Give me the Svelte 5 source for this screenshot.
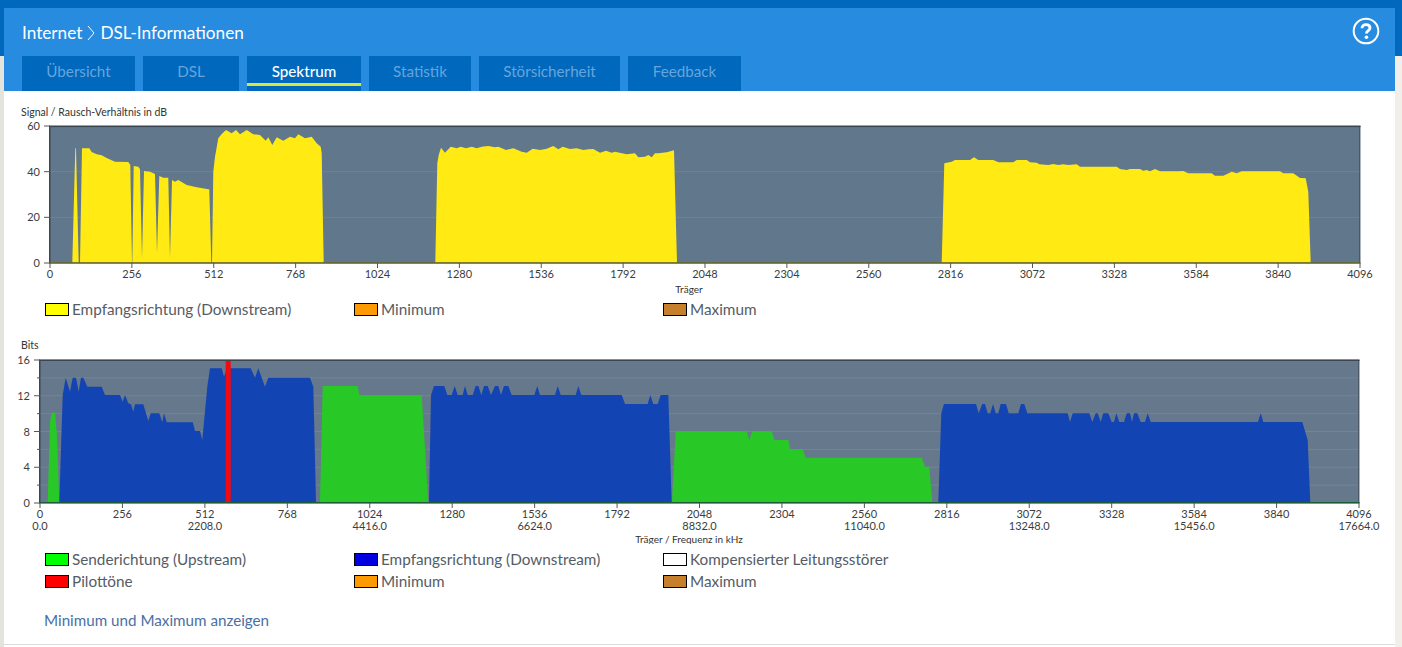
<script>
  const z = (ox, oy, pts) =>
    pts.map(([x, y]) => `${(ox + x / 3).toFixed(1)},${(oy + y / 3).toFixed(1)}`).join(' ');

  // Signal-to-noise curve, traced from the measured spectrum
  const snrA = z(0, 100, [[217,488],[226,145],[228,145],[236,488],[240,488],[246,145],[268,145],[275,156],[290,163],[305,166],[320,174],[345,185],[385,186],[391,195],[396,488],[397,488],[401,198],[415,200],[420,208],[426,475],[432,213],[450,215],[465,222],[471,460],[478,228],[490,233],[505,233],[510,475],[516,240],[525,245],[535,240],[560,255],[590,262],[625,268],[628,268],[634,488],[636,488],[640,215],[645,170],[655,115],[665,102],[678,90],[695,100],[708,90],[720,103],[740,90],[760,103],[780,105],[797,122],[805,112],[817,135],[830,112],[850,122],[870,110],[885,115],[895,103],[915,115],[935,110],[950,130],[962,140],[965,160],[971,488]]);
  const snrB = z(340, 100, [[286,488],[292,190],[296,165],[303,143],[315,158],[332,140],[350,145],[362,140],[378,145],[395,140],[410,145],[425,140],[445,138],[465,142],[475,140],[498,150],[520,145],[545,155],[560,158],[578,146],[600,150],[620,146],[640,138],[655,148],[668,140],[690,147],[710,145],[730,150],[745,148],[760,147],[780,158],[798,152],[815,158],[825,155],[860,163],[885,160],[895,172],[915,170],[925,165],[935,172],[945,160],[955,160],[980,157],[1002,151],[1011,488]]);
  const snrC = z(920, 130, [[65,398],[73,100],[95,95],[105,90],[150,90],[162,82],[175,90],[220,90],[235,97],[280,97],[290,90],[320,90],[330,97],[350,98],[358,103],[385,105],[400,102],[415,105],[430,103],[445,105],[470,103],[480,110],[590,110],[600,117],[620,120],[630,117],[660,117],[670,122],[680,120],[690,124],[705,117],[720,124],[775,124],[790,123],[805,130],[875,130],[885,137],[910,137],[935,125],[950,130],[965,124],[1080,124],[1090,130],[1120,130],[1140,144],[1157,145],[1165,185],[1172,398]]);

  // Bit allocation
  const green1 = z(0, 335, [[143,503],[150,260],[155,235],[165,232],[170,290],[178,503]]);
  const blue1 = z(0, 335, [[178,503],[188,180],[197,128],[210,170],[218,128],[228,128],[236,170],[243,128],[250,128],[262,155],[305,155],[315,180],[360,180],[368,200],[375,180],[385,205],[393,208],[400,230],[405,208],[430,208],[445,258],[452,235],[478,235],[487,262],[492,235],[500,262],[578,262],[585,288],[600,288],[607,315],[622,155],[630,100],[665,100],[672,125],[680,100],[752,100],[765,128],[775,100],[795,155],[805,128],[930,128],[940,155],[948,503]]);
  const green2 = z(310, 350, [[30,458],[38,108],[143,108],[148,135],[335,135],[355,458]]);
  const blue2 = z(310, 350, [[357,458],[363,135],[372,108],[403,108],[412,135],[425,135],[434,108],[443,135],[458,135],[465,108],[473,135],[488,135],[497,108],[505,108],[514,135],[522,108],[533,108],[543,135],[555,108],[565,108],[573,135],[582,108],[595,108],[605,135],[673,135],[682,108],[690,135],[735,135],[743,108],[752,135],[797,135],[805,108],[814,135],[935,135],[945,162],[1013,162],[1021,135],[1030,162],[1043,162],[1052,135],[1075,135],[1085,458]]);
  const green3 = z(660, 350, [[36,458],[47,243],[260,243],[268,270],[277,243],[335,243],[343,270],[385,270],[390,297],[428,297],[437,323],[785,323],[795,350],[808,350],[817,458]]);
  const blue3 = z(930, 350, [[25,458],[34,190],[42,162],[138,162],[146,190],[157,162],[165,162],[173,190],[181,190],[189,162],[197,190],[205,190],[212,162],[228,162],[236,190],[265,190],[273,162],[283,162],[292,190],[413,190],[420,216],[428,190],[478,190],[487,216],[497,190],[503,190],[512,216],[520,190],[535,190],[545,216],[552,216],[559,190],[568,216],[582,216],[590,190],[600,190],[606,216],[612,190],[622,190],[632,216],[645,216],[653,190],[662,216],[984,216],[992,190],[1000,216],[1117,216],[1133,270],[1141,458]]);

  const carriers = Array.from({ length: 17 }, (_, i) => i * 256);
  const x1 = (c) => 50 + (c * 1310) / 4096;
  const x2 = (c) => 40 + (c * 1319) / 4096;
  const y1 = (v) => 263 - (v * 137) / 60;
  const y2 = (v) => 503 - (v * 143) / 16;
  const freq = (c) => ((c * 17664) / 4096).toFixed(1);

  const tabs = ['Übersicht', 'DSL', 'Spektrum', 'Statistik', 'Störsicherheit', 'Feedback'];

  const legend1 = [
    { label: 'Empfangsrichtung (Downstream)', color: '#ffff00' },
    { label: 'Minimum', color: '#ff9900' },
    { label: 'Maximum', color: '#c67f2a' }
  ];
  const legend2 = [
    { label: 'Senderichtung (Upstream)', color: '#00ff00' },
    { label: 'Empfangsrichtung (Downstream)', color: '#0000e0' },
    { label: 'Kompensierter Leitungsstörer', color: '#ffffff' },
    { label: 'Pilottöne', color: '#ff0000' },
    { label: 'Minimum', color: '#ff9900' },
    { label: 'Maximum', color: '#c67f2a' }
  ];
</script>

<div class="page">
  <div class="card">
    <header class="head">
      <div class="titlebar">
        <h1>Internet <svg class="chev" viewBox="0 0 8 16" width="8" height="16"><path d="M1 1 L7 8 L1 15" fill="none" stroke="#fff" stroke-width="1"/></svg> DSL-Informationen</h1>
        <svg class="help" viewBox="0 0 28 28" width="28" height="28">
          <circle cx="14" cy="14" r="12.3" fill="none" stroke="#fff" stroke-width="2"/>
          <path d="M10 11.2 C10 8.8 11.8 7.6 14 7.6 C16.4 7.6 18 9 18 11 C18 13.6 14.4 13.8 14.4 16.6" fill="none" stroke="#fff" stroke-width="2.8"/>
          <circle cx="14.4" cy="20.2" r="1.8" fill="#fff"/>
        </svg>
      </div>
      <nav class="tabs">
        {#each tabs as t}
          <a class="tab" class:active={t === 'Spektrum'} href="#{t}">{t}</a>
        {/each}
      </nav>
    </header>

    <main class="content">
      <div class="ctitle first">Signal / Rausch-Verhältnis in dB</div>
      <svg class="chart one" viewBox="4 119 1391 180" width="1391" height="180">
        <rect x="50" y="126" width="1310" height="137" fill="#61778c"/>
        {#each [20, 40] as v}
          <line x1="50" x2="1360" y1={y1(v)} y2={y1(v)} stroke="#fff" stroke-opacity=".09"/>
        {/each}
        <polygon points={snrA} fill="#ffea14"/>
        <polygon points={snrB} fill="#ffea14"/>
        <polygon points={snrC} fill="#ffea14"/>
        <rect x="49" y="125.5" width="1311.5" height="1.6" fill="#3b4653"/>
        <rect x="49" y="126" width="1.5" height="137" fill="#3b4653"/>
        <rect x="1359.4" y="126" width="1" height="137" fill="#3b4653"/>
        <rect x="49" y="262.2" width="1311.5" height="1.6" fill="#66662c"/>
        {#each [0, 20, 40, 60] as v}
          <line x1="44" x2="50" y1={y1(v)} y2={y1(v)} stroke="#555"/>
          <text class="tick" x="40" y={y1(v) + 4} text-anchor="end">{v}</text>
        {/each}
        {#each carriers as c}
          <line x1={x1(c)} x2={x1(c)} y1="263" y2="268" stroke="#555"/>
          <text class="tick" x={x1(c)} y="278" text-anchor="middle">{c}</text>
        {/each}
        <text class="tick small" x="689" y="293" text-anchor="middle">Träger</text>
      </svg>
      <div class="legend">
        {#each legend1 as l}
          <div class="item"><i class="swatch" style="background:{l.color}"></i>{l.label}</div>
        {/each}
      </div>

      <div class="ctitle second">Bits</div>
      <svg class="chart two" viewBox="4 352 1391 192" width="1391" height="192">
        <rect x="40" y="360" width="1319" height="143" fill="#66788c"/>
        {#each [2, 4, 6, 8, 10, 12, 14] as v}
          <line x1="40" x2="1359" y1={y2(v)} y2={y2(v)} stroke="#fff" stroke-opacity=".09"/>
        {/each}
        <polygon points={green1} fill="#28c926"/>
        <polygon points={blue1} fill="#1244b4"/>
        <polygon points={green2} fill="#28c926"/>
        <polygon points={blue2} fill="#1244b4"/>
        <polygon points={green3} fill="#28c926"/>
        <polygon points={blue3} fill="#1244b4"/>
        <rect x="225.7" y="360" width="5" height="143" fill="#f5090f"/>
        <rect x="39" y="359.4" width="1320.5" height="1.6" fill="#3b4653"/>
        <rect x="39" y="360" width="1.5" height="143" fill="#3b4653"/>
        <rect x="1358.4" y="360" width="1" height="143" fill="#3b4653"/>
        <rect x="39" y="502" width="1320.5" height="1.6" fill="#1d5a38"/>
        {#each [0, 2, 4, 6, 8, 10, 12, 14, 16] as v}
          <line x1={v % 4 === 0 ? 34 : 37} x2="40" y1={y2(v)} y2={y2(v)} stroke="#555"/>
          {#if v % 4 === 0}
            <text class="tick" x="30" y={y2(v) + 4} text-anchor="end">{v}</text>
          {/if}
        {/each}
        {#each carriers as c, i}
          <line x1={x2(c)} x2={x2(c)} y1="503" y2="508" stroke="#555"/>
          <text class="tick" x={x2(c)} y="518" text-anchor="middle">{c}</text>
          {#if i % 2 === 0}
            <text class="tick" x={x2(c)} y="530" text-anchor="middle">{freq(c)}</text>
          {/if}
        {/each}
        <text class="tick small" x="689" y="543" text-anchor="middle">Träger / Frequenz in kHz</text>
      </svg>
      <div class="legend multi">
        {#each legend2 as l}
          <div class="item"><i class="swatch" style="background:{l.color}"></i>{l.label}</div>
        {/each}
      </div>

      <a class="toggle" href="#minmax">Minimum und Maximum anzeigen</a>
    </main>
  </div>
</div>

<style>
  :global(body) {
    margin: 0;
    font-family: "Lato", "Open Sans", sans-serif;
    background: #fff;
    overflow: hidden;
  }
  .page {
    height: 647px;
    box-sizing: border-box;
    padding: 8px 7px 0 4px;
    background: linear-gradient(to bottom, #0068bd 56px, transparent 56px),
      linear-gradient(to right, #e4e4dc 4px, #f2efea 4px);
  }
  .card {
    background: #fff;
    height: 639px;
  }
  .head {
    height: 83px;
    background: #278ce0;
    display: flex;
    flex-direction: column;
  }
  .titlebar {
    height: 48px;
    display: flex;
    align-items: center;
    justify-content: space-between;
    padding: 1px 15px 0 18px;
    box-sizing: border-box;
  }
  h1 {
    margin: 0;
    color: #fff;
    font-size: 17.2px;
    font-weight: 400;
    display: flex;
    align-items: center;
    gap: 5px;
  }
  .help {
    display: block;
    margin-top: -4px;
  }
  .tabs {
    display: flex;
    gap: 8px;
    padding-left: 18px;
    height: 35px;
  }
  .tab {
    background: #0068bd;
    color: #66a5dc;
    font-size: 15.2px;
    line-height: 30px;
    text-align: center;
    text-decoration: none;
    box-sizing: border-box;
  }
  .tab:nth-child(1) { width: 113px; }
  .tab:nth-child(2) { width: 96px; }
  .tab:nth-child(3) { width: 114px; }
  .tab:nth-child(4) { width: 102px; }
  .tab:nth-child(5) { width: 141px; }
  .tab:nth-child(6) { width: 113px; }
  .tab.active {
    color: #fff;
    font-weight: 500;
    height: 35px;
    box-shadow: inset 0 -5px 0 #0068bd, inset 0 -8px 0 #dbe63a;
  }
  .content {
    height: 553px;
    border-bottom: 1px solid #dcdcdc;
  }
  .ctitle {
    font-size: 10.5px;
    line-height: 14px;
    color: #333;
    padding-left: 17px;
  }
  .ctitle.first { padding-top: 14px; }
  .ctitle.second { padding-top: 18px; height: 14px; }
  .chart { display: block; }
  .tick {
    font-size: 11px;
    fill: #3d3d3d;
    font-family: "Lato", "Open Sans", sans-serif;
  }
  .tick.small { font-size: 10px; fill: #333; }
  .legend {
    display: grid;
    grid-template-columns: 309px 309px 1fr;
    grid-auto-rows: 22px;
    align-content: start;
    margin-top: -1px;
    padding-left: 41px;
    height: 22px;
    color: #555c66;
    font-size: 15.3px;
    line-height: 21px;
  }
  .legend.multi { height: 45px; margin-top: 4px; }
  .item { display: flex; align-items: center; gap: 3px; }
  .swatch {
    width: 24px;
    height: 13px;
    box-sizing: border-box;
    border: 1px solid #000;
    display: block;
    flex: none;
  }
  .toggle {
    display: block;
    margin: 17px 0 0 40px;
    color: #4a6fa5;
    font-size: 15.2px;
    line-height: 20px;
    text-decoration: none;
  }
</style>
